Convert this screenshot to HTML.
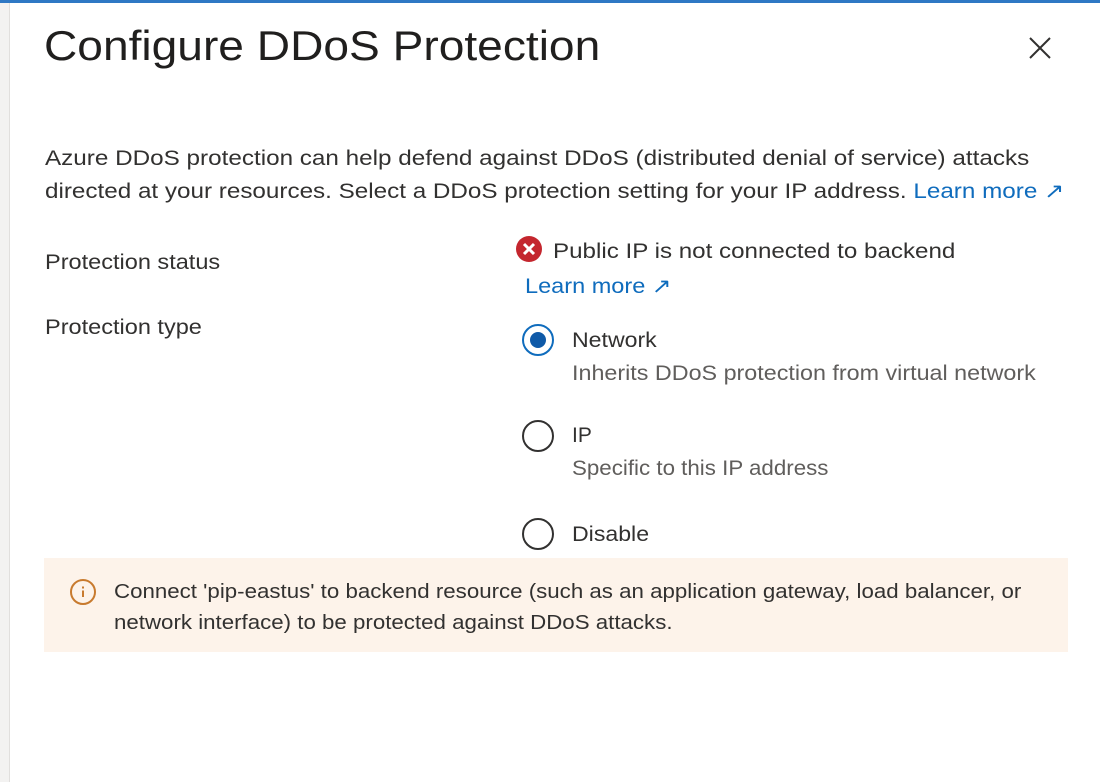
<!DOCTYPE html>
<html><head><style>
body{margin:0;width:1100px;height:782px;background:#fff;overflow:hidden;position:relative;font-family:"Liberation Sans",sans-serif;color:#323130}
.a{position:absolute;white-space:nowrap;transform-origin:0 0}
.t{font-size:21px}
.l{color:#0f6cbd}
.s{color:#605e5c}
.r{position:absolute;width:32px;height:32px;border:2px solid #323130;border-radius:50%;box-sizing:border-box}
</style></head><body>
<div style="position:absolute;left:0;top:0;width:1100px;height:3px;background:#2f78c4"></div>
<div style="position:absolute;left:0;top:3px;width:9px;height:779px;background:#f3f2f1;border-right:1px solid #e1dfdd"></div>
<div class="a" style="left:44px;top:22px;font-size:42px;color:#201f1e;transform:scaleX(1.098)">Configure DDoS Protection</div>
<svg class="a" style="left:1028px;top:36px" width="24" height="24"><path d="M2 2L22 22M22 2L2 22" stroke="#323130" stroke-width="2"/></svg>
<div class="a t" style="left:45px;top:147px;transform:scaleX(1.155)">Azure DDoS protection can help defend against DDoS (distributed denial of service) attacks</div>
<div class="a t" style="left:45px;top:179px;transform:scaleX(1.154)">directed at your resources. Select a DDoS protection setting for your IP address. <span class="l">Learn more ↗</span></div>
<div class="a t" style="left:45px;top:251px;transform:scaleX(1.12)">Protection status</div>
<div class="a t" style="left:45px;top:316px;transform:scaleX(1.12)">Protection type</div>
<svg class="a" style="left:515px;top:235px" width="28" height="28"><circle cx="14" cy="14" r="13" fill="#c4262e"/><path d="M9 9L19 19M19 9L9 19" stroke="#fff" stroke-width="3"/></svg>
<div class="a t" style="left:553px;top:240px;transform:scaleX(1.15)">Public IP is not connected to backend</div>
<div class="a t l" style="left:525px;top:274px;transform:scaleX(1.12)">Learn more ↗</div>
<div class="r" style="left:522px;top:324px;border-color:#0f6cbd"><div style="position:absolute;left:6px;top:6px;width:16px;height:16px;border-radius:50%;background:#0f5aa8"></div></div>
<div class="a t" style="left:572px;top:329px;transform:scaleX(1.1)">Network</div>
<div class="a t s" style="left:572px;top:362px;transform:scaleX(1.11)">Inherits DDoS protection from virtual network</div>
<div class="r" style="left:522px;top:420px"></div>
<div class="a t" style="left:572px;top:424px">IP</div>
<div class="a t s" style="left:572px;top:457px;transform:scaleX(1.063)">Specific to this IP address</div>
<div class="r" style="left:522px;top:518px"></div>
<div class="a t" style="left:572px;top:523px;transform:scaleX(1.1)">Disable</div>
<div style="position:absolute;left:44px;top:558px;width:1024px;height:94px;background:#fdf3ea"></div>
<svg class="a" style="left:68px;top:577px" width="30" height="30"><circle cx="15" cy="15" r="12" fill="none" stroke="#c87a2e" stroke-width="2"/><path d="M15 9.5V11.5M15 13.5V20" stroke="#c87a2e" stroke-width="2"/></svg>
<div class="a" style="left:114px;top:581px;font-size:20px;color:#323130;transform:scaleX(1.114)">Connect 'pip-eastus' to backend resource (such as an application gateway, load balancer, or</div>
<div class="a" style="left:114px;top:612px;font-size:20px;color:#323130;transform:scaleX(1.114)">network interface) to be protected against DDoS attacks.</div>
</body></html>
